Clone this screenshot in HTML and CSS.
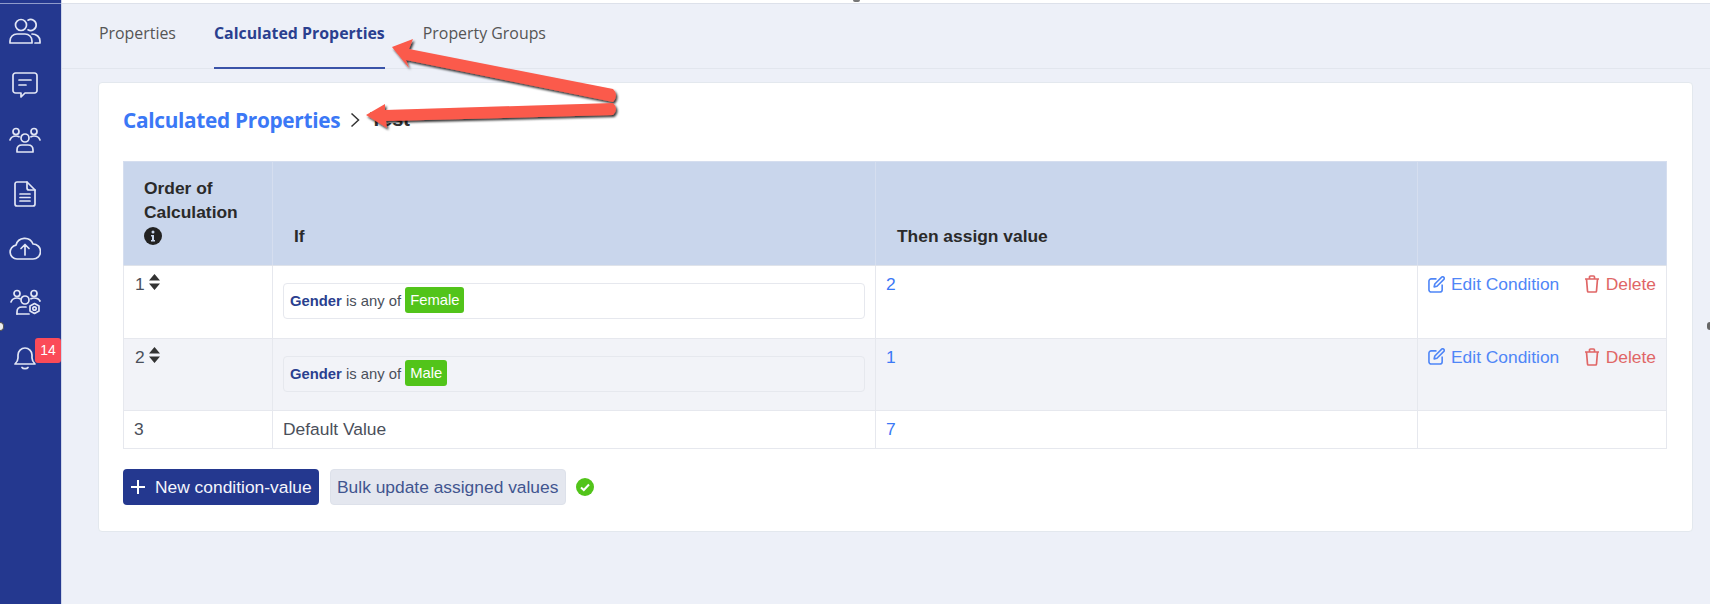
FILE: index.html
```html
<!DOCTYPE html>
<html lang="en">
<head>
    <meta charset="UTF-8">
    <meta name="viewport" content="width=device-width, initial-scale=1.0">
    <title>Calculated Properties</title>
    <link rel="stylesheet" href="styles.css">
</head>
<body>
    <nav class="sidebar">
        <div class="side-icon">
            <svg viewBox="0 0 32 26"><circle cx="12" cy="7" r="5.500"/><path d="M1 25v-2c0-4 3-7 7-7h8c4 0 7 3 7 7v2z"/><path d="M19 2.200a5.500 5.500 0 1 1 0 9.600"/><path d="M23 16c4.500 0 8 3 8 7v2h-5"/></svg>
        </div>
        <div class="side-icon">
            <svg viewBox="0 0 26 26"><path d="M3.500 1h19a2.500 2.500 0 0 1 2.500 2.500v15a2.500 2.500 0 0 1-2.500 2.500H13l-4 4v-4H3.500A2.500 2.500 0 0 1 1 18.500v-15A2.500 2.500 0 0 1 3.500 1z"/><path d="M7 8h12M7 13h7"/></svg>
        </div>
        <div class="side-icon">
            <svg viewBox="0 0 32 26"><circle cx="7" cy="4.500" r="3"/><circle cx="25" cy="4.500" r="3"/><circle cx="16" cy="11" r="4"/><path d="M1 13c1-3 3-4 6-4 1 0 2 .2 3 .8M31 13c-1-3-3-4-6-4-1 0-2 .2-3 .8"/><path d="M8 25v-2c0-3 2-5 5-5h6c3 0 5 2 5 5v2z"/></svg>
        </div>
        <div class="side-icon">
            <svg viewBox="0 0 22 26"><path d="M3 1h10l8 8v14a2 2 0 0 1-2 2H3a2 2 0 0 1-2-2V3a2 2 0 0 1 2-2z"/><path d="M13 1v6a2 2 0 0 0 2 2h6"/><path d="M6 13h10M6 16.500h10M6 20h10"/></svg>
        </div>
        <div class="side-icon">
            <svg viewBox="0 0 32 24"><path d="M8 23a7 7 0 0 1-1-13.900A9 9 0 0 1 24 8a7.500 7.500 0 0 1 0 15z"/><path d="M16 19v-10M12 12.500l4-4 4 4"/></svg>
        </div>
        <div class="side-icon">
            <svg viewBox="0 0 32 26"><circle cx="8" cy="4.500" r="3"/><circle cx="25" cy="4.500" r="3"/><circle cx="16" cy="11" r="4"/><path d="M2 13c1-3 3-4 6-4 1 0 2 .2 3 .8M31 12c-1-2-3-3-6-3-1 0-2 .2-3 .8"/><path d="M8 25v-2c0-3 2-5 5-5h4"/><path d="M8 25h12"/><path d="M25.500 14.500l4.500 2.500v5l-4.500 2.500-4.500-2.500v-5z"/><circle cx="25.500" cy="19.500" r="1.700"/></svg>
        </div>
        <div class="side-icon bell">
            <svg viewBox="0 0 22 26"><path d="M1 20c2-2 3-3 3-6v-3a7 7 0 0 1 14 0v3c0 3 1 4 3 6z"/><path d="M8 23.500c1 1.500 5 1.500 6 0"/></svg>
            <span class="badge">14</span>
        </div>
    </nav>

    <div class="main">
        <div class="top-strip"><span class="strip-mark"></span></div>
        <div class="tabs">
            <a class="tab">Properties</a>
            <a class="tab active">Calculated Properties</a>
            <a class="tab">Property Groups</a>
        </div>

        <div class="card">
            <div class="crumbs">
                <a class="crumb-link">Calculated Properties</a>
                <svg class="crumb-sep" viewBox="0 0 10 16"><path d="M1.500 1.500l7 6.500-7 6.500"/></svg>
                <span class="crumb-current">Test</span>
            </div>

            <table class="cond-table">
                <colgroup>
                    <col class="col-order">
                    <col class="col-if">
                    <col class="col-then">
                    <col class="col-actions">
                </colgroup>
                <thead>
                    <tr>
                        <th class="th-order">Order of Calculation<br>
                            <svg class="info" viewBox="0 0 18 18"><circle cx="9" cy="9" r="9"/><circle class="info-mark" cx="9" cy="5" r="1.500"/><path class="info-mark" d="M7 8h3v5h1v1.500H7V13h1v-3.500H7z"/></svg>
                        </th>
                        <th class="th-if">If</th>
                        <th class="th-then">Then assign value</th>
                        <th></th>
                    </tr>
                </thead>
                <tbody>
                    <tr>
                        <td class="order">1 <svg class="sort" viewBox="0 0 12 16"><path d="M6 0l5.500 6.500H.5zM6 16L.5 9.500h11z"/></svg></td>
                        <td><div class="cond"><b>Gender</b> is any of <span class="tag">Female</span></div></td>
                        <td><a class="value">2</a></td>
                        <td>
                            <div class="actions">
                                <a class="edit"><svg viewBox="0 0 18 18"><path d="M9 3H3.500A2.500 2.500 0 0 0 1 5.500v9A2.500 2.500 0 0 0 3.500 17h9a2.500 2.500 0 0 0 2.500-2.500V9"/><path d="M6.500 11.500l.7-3L14.500 1.200a1.400 1.400 0 0 1 2 0l.3.300a1.400 1.400 0 0 1 0 2L9.500 10.800z"/></svg>Edit Condition</a>
                                <a class="del"><svg viewBox="0 0 16 18"><path d="M1 4h14M5.500 4V2a1 1 0 0 1 1-1h3a1 1 0 0 1 1 1v2"/><path d="M2.500 4l1 12a1 1 0 0 0 1 1h7a1 1 0 0 0 1-1l1-12"/></svg>Delete</a>
                            </div>
                        </td>
                    </tr>
                    <tr class="striped">
                        <td class="order">2 <svg class="sort" viewBox="0 0 12 16"><path d="M6 0l5.500 6.500H.5zM6 16L.5 9.500h11z"/></svg></td>
                        <td><div class="cond"><b>Gender</b> is any of <span class="tag">Male</span></div></td>
                        <td><a class="value">1</a></td>
                        <td>
                            <div class="actions">
                                <a class="edit"><svg viewBox="0 0 18 18"><path d="M9 3H3.500A2.500 2.500 0 0 0 1 5.500v9A2.500 2.500 0 0 0 3.500 17h9a2.500 2.500 0 0 0 2.500-2.500V9"/><path d="M6.500 11.500l.7-3L14.500 1.200a1.400 1.400 0 0 1 2 0l.3.300a1.400 1.400 0 0 1 0 2L9.500 10.800z"/></svg>Edit Condition</a>
                                <a class="del"><svg viewBox="0 0 16 18"><path d="M1 4h14M5.500 4V2a1 1 0 0 1 1-1h3a1 1 0 0 1 1 1v2"/><path d="M2.500 4l1 12a1 1 0 0 0 1 1h7a1 1 0 0 0 1-1l1-12"/></svg>Delete</a>
                            </div>
                        </td>
                    </tr>
                    <tr class="last-row">
                        <td>3</td>
                        <td>Default Value</td>
                        <td><a class="value">7</a></td>
                        <td></td>
                    </tr>
                </tbody>
            </table>

            <div class="buttons">
                <button class="btn btn-primary"><svg viewBox="0 0 14 14"><path d="M7 0v14M0 7h14"/></svg>New condition-value</button>
                <button class="btn btn-light">Bulk update assigned values</button>
                <svg class="ok" viewBox="0 0 18 18"><circle cx="9" cy="9" r="9"/><path d="M5 9.500l2.800 2.500L13 6.500"/></svg>
            </div>
        </div>
    </div>

    <!-- annotation arrows drawn over the screenshot -->
    <svg class="arrows" viewBox="0 0 1710 604">
        <defs>
            <filter id="arrow-shadow" x="-10%" y="-50%" width="120%" height="200%">
                <feDropShadow dx="1.500" dy="2" stdDeviation="1" flood-color="#000" flood-opacity="0.8"/>
            </filter>
        </defs>
        <path filter="url(#arrow-shadow)" d="M392 47L413 39L409 49L613 89Q619 95 613 102L406 60L409 68z"/>
        <path filter="url(#arrow-shadow)" d="M366 115L385 104L385 110L613 103Q619 109 613 115L386 121L387 128z"/>
    </svg>
    <span class="edge-dot left"></span>
    <span class="edge-dot right"></span>
</body>
</html>
```

FILE: styles.css
```css
html, body {
    margin: 0;
    padding: 0;
    height: 604px;
    overflow: hidden;
}

body {
    display: flex;
    font-family: 'Liberation Sans', Arial, sans-serif;
    background: #edf0f8;
    color: #444;
    position: relative;
}

.sidebar {
    width: 62px;
    flex: none;
    box-sizing: border-box;
    background: #24388f;
    border-right: 1px solid #cfd6ea;
    padding: 18px 11px 0 0;
    display: flex;
    flex-direction: column;
    position: relative;
}

/* thin light line across the top of the rail */
.sidebar::before {
    content: "";
    position: absolute;
    left: 0;
    right: 0;
    top: 3px;
    height: 1px;
    background: #8f9bcb;
}

.side-icon {
    height: 54.300px;
    flex: none;
    display: flex;
    justify-content: center;
    position: relative;
}

.side-icon svg {
    width: 32px;
    height: 26px;
    fill: none;
    stroke: #e2e6f5;
    stroke-width: 1.700;
    stroke-linejoin: round;
    stroke-linecap: round;
}

.badge {
    position: absolute;
    top: -6px;
    right: -11px;
    background: #fb4b58;
    color: #fff;
    font-size: 14px;
    line-height: 25px;
    width: 26px;
    text-align: center;
    border-radius: 3px;
}

.main {
    flex: 1;
    min-width: 0;
}

.top-strip {
    height: 3px;
    background: #fff;
    border-bottom: 1px solid #dde1ea;
    position: relative;
}

.strip-mark {
    position: absolute;
    left: 791px;
    top: 0;
    width: 7px;
    height: 2px;
    border-radius: 0 0 4px 4px;
    background: #777;
}

.tabs {
    height: 65px;
    box-sizing: border-box;
    display: flex;
    gap: 38px;
    padding-left: 37px;
    border-bottom: 1px solid #e2e6ee;
}

.tab {
    font-family: 'Open Sans', sans-serif;
    font-size: 15.900px;
    line-height: 59px;
    color: #555;
}

.tab.active {
    color: #2a3f8f;
    font-weight: 700;
    border-bottom: 2px solid #3a53a8;
    height: 65px;
    box-sizing: border-box;
}

.card {
    margin: 13px 17px 0 36px;
    height: 450px;
    box-sizing: border-box;
    background: #fff;
    border: 1px solid #e3e8ee;
    border-radius: 4px;
    padding: 0 24px;
}

.crumbs {
    height: 78px;
    box-sizing: border-box;
    display: flex;
    align-items: center;
    gap: 10px;
    padding-bottom: 5px;
}

.crumb-link {
    font-family: 'Open Sans', sans-serif;
    font-size: 20.800px;
    font-weight: 700;
    letter-spacing: -0.300px;
    color: #3b78f6;
}

.crumb-sep {
    width: 10px;
    height: 16px;
    fill: none;
    stroke: #333;
    stroke-width: 1.500;
}

.crumb-current {
    font-size: 20px;
    font-weight: 700;
    color: #333;
}

.cond-table {
    width: 1543px;
    table-layout: fixed;
    border-collapse: collapse;
    font-size: 17.400px;
}

.col-order { width: 149px; }
.col-if { width: 603px; }
.col-then { width: 542px; }
.col-actions { width: 249px; }

.cond-table th {
    background: #c9d6ec;
    border: 1px solid #d5deef;
    border-bottom: 1px solid #dfe3ea;
    height: 104px;
    box-sizing: border-box;
    padding: 0 20px 17px;
    vertical-align: bottom;
    text-align: left;
    font-size: 17.400px;
    line-height: 24.500px;
    color: #2a2a2a;
}

.cond-table th.th-order {
    padding-bottom: 16px;
}

.cond-table th.th-if {
    padding-left: 21px;
}

.cond-table th.th-then {
    padding-left: 21px;
}

.info {
    width: 18px;
    height: 18px;
    vertical-align: -2px;
    fill: #222;
}

.info .info-mark {
    fill: #c9d6ec;
}

.cond-table td {
    border: 1px solid #e6e8ee;
    height: 72.500px;
    box-sizing: border-box;
    padding: 7px 10px;
    vertical-align: top;
    line-height: 22px;
    color: #4a4f5a;
}

.cond-table td.order {
    padding-left: 11px;
}

.striped td {
    background: #f2f3f8;
}

.cond-table .last-row td {
    height: 38px;
    padding-top: 7px;
}

.sort {
    width: 13px;
    height: 16px;
    fill: #333;
    margin-left: -2px;
    vertical-align: 0;
}

.cond {
    margin-top: 10px;
    height: 36px;
    box-sizing: border-box;
    border: 1px solid #e6e8ee;
    border-radius: 4px;
    padding: 0 6px;
    font-size: 14.800px;
    line-height: 34px;
    white-space: nowrap;
}

.cond b {
    color: #2a3f8f;
}

.tag {
    display: inline-block;
    background: #52c41a;
    color: #fff;
    line-height: 26px;
    padding: 0 5px;
    border-radius: 3px;
    vertical-align: 1px;
}

.value {
    color: #3b78f6;
}

.actions {
    display: flex;
    justify-content: space-between;
}

.edit, .del {
    display: flex;
    align-items: center;
    gap: 6px;
}

.edit {
    color: #4f86f7;
}

.del {
    color: #e06666;
}

.edit svg, .del svg {
    fill: none;
    stroke: currentColor;
    stroke-width: 1.700;
    stroke-linejoin: round;
}

.edit svg {
    width: 17px;
    height: 17px;
}

.del svg {
    width: 16px;
    height: 18px;
}

.buttons {
    display: flex;
    align-items: center;
    gap: 11px;
    margin-top: 20px;
}

.btn {
    height: 36px;
    box-sizing: border-box;
    border-radius: 4px;
    font-family: 'Liberation Sans', Arial, sans-serif;
    font-size: 17.400px;
    padding: 0 6px;
    display: flex;
    align-items: center;
    border: 1px solid transparent;
    white-space: nowrap;
}

.btn-primary {
    width: 196px;
    background: #24388f;
    color: #f4f6fc;
    gap: 10px;
}

.btn-primary svg {
    width: 14px;
    height: 14px;
    stroke: #fff;
    stroke-width: 2;
    margin-left: 1px;
}

.btn-light {
    width: 236px;
    background: #e4e7ef;
    color: #41558f;
    border-color: #dde1ea;
}

.ok {
    width: 18px;
    height: 18px;
    margin-left: -1px;
    fill: #52c41a;
}

.ok path {
    fill: none;
    stroke: #fff;
    stroke-width: 2;
}

.arrows {
    position: absolute;
    left: 0;
    top: 0;
    width: 1710px;
    height: 604px;
    fill: #fb5a4b;
    pointer-events: none;
}

.edge-dot {
    position: absolute;
    top: 322px;
    width: 5px;
    height: 8px;
    background: #666;
}

.edge-dot.left {
    left: 0;
    border-radius: 0 4px 4px 0;
    background: #eee;
    border: 1px solid #555;
    border-left: none;
    width: 3px;
    height: 7px;
}

.edge-dot.right {
    right: 0;
    width: 3px;
    border-radius: 4px 0 0 4px;
}
```
